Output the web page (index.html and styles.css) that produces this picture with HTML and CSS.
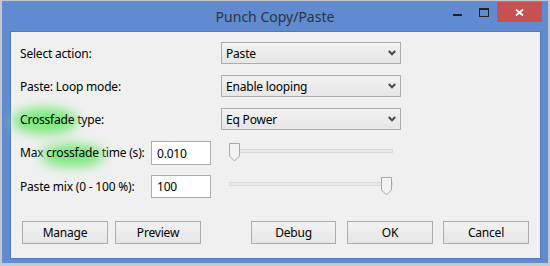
FILE: index.html
```html
<!DOCTYPE html>
<html>
<head>
<meta charset="utf-8">
<link rel="stylesheet" href="styles.css">
</head>
<body>
<div class="window">
  <div class="titlebar">
    <div class="tb-side"></div>
    <div class="title">Punch Copy/Paste</div>
    <div class="tb-side tb-controls">
      <div class="ctl ctl-min"><span class="min-bar"></span></div>
      <div class="ctl ctl-max"><span class="max-box"></span></div>
      <div class="ctl ctl-close">
        <svg width="9" height="7" viewBox="0 0 9 7"><path d="M1 0.5 L8 6.5 M8 0.5 L1 6.5" stroke="#fff" stroke-width="1.8" fill="none"/></svg>
      </div>
    </div>
  </div>
  <div class="client">
    <div class="row row-combo">
      <label class="lbl lbl-wide">Select action:</label>
      <div class="combo"><span>Paste</span><svg class="chev" width="8" height="6" viewBox="0 0 8 6"><path d="M0.8 1 L4 4.3 L7.2 1" stroke="#4a4a4a" stroke-width="2" fill="none"/></svg></div>
    </div>
    <div class="row row-combo">
      <label class="lbl lbl-wide">Paste: Loop mode:</label>
      <div class="combo"><span>Enable looping</span><svg class="chev" width="8" height="6" viewBox="0 0 8 6"><path d="M0.8 1 L4 4.3 L7.2 1" stroke="#4a4a4a" stroke-width="2" fill="none"/></svg></div>
    </div>
    <div class="row row-combo">
      <label class="lbl lbl-wide"><span class="hl hl-a">Crossfade</span> type:</label>
      <div class="combo"><span>Eq Power</span><svg class="chev" width="8" height="6" viewBox="0 0 8 6"><path d="M0.8 1 L4 4.3 L7.2 1" stroke="#4a4a4a" stroke-width="2" fill="none"/></svg></div>
    </div>
    <div class="row row-edit">
      <label class="lbl lbl-narrow">Max <span class="hl hl-b">crossfade</span> time (s):</label>
      <div class="edit">0.010</div>
      <div class="slider">
        <div class="track"></div>
        <svg class="thumb thumb-left" width="12" height="19" viewBox="0 0 12 19"><path d="M0.5 0.5 H10.5 V13 L5.5 18 L0.5 13 Z" fill="#f2f2f2" stroke="#a8a8a8"/></svg>
      </div>
    </div>
    <div class="row row-edit row-edit2">
      <label class="lbl lbl-narrow">Paste mix (0 - 100 %):</label>
      <div class="edit">100</div>
      <div class="slider">
        <div class="track"></div>
        <svg class="thumb thumb-right" width="12" height="19" viewBox="0 0 12 19"><path d="M0.5 0.5 H10.5 V13 L5.5 18 L0.5 13 Z" fill="#f2f2f2" stroke="#a8a8a8"/></svg>
      </div>
    </div>
    <div class="buttons">
      <div class="btn">Manage</div>
      <div class="btn btn-preview">Preview</div>
      <div class="btn btn-debug">Debug</div>
      <div class="btn btn-ok">OK</div>
      <div class="btn btn-cancel">Cancel</div>
    </div>
  </div>
</div>
</body>
</html>
```
FILE: styles.css
```css
* { box-sizing: border-box; }
html, body { margin: 0; padding: 0; }
body {
  width: 550px;
  height: 266px;
  background: #c4c7cd;
  padding: 1px 2px 0 2px;
  font-family: "Noto Sans", "Open Sans", sans-serif;
  font-size: 12px;
  letter-spacing: -0.2px;
  color: #000;
  overflow: hidden;
}
.window {
  width: 546px;
  height: 262px;
  background: #618bd0;
  padding: 0 7px 4px 8px;
  display: flex;
  flex-direction: column;
}
.titlebar {
  height: 30px;
  display: grid;
  grid-template-columns: 1fr auto 1fr;
  margin: 0 -7px 0 -8px;
}
.title {
  font-size: 14px;
  letter-spacing: 0;
  color: #2d3440;
  line-height: 30px;
  padding-top: 1px;
}
.tb-controls {
  display: flex;
  justify-content: flex-end;
  align-items: flex-start;
  padding-right: 6px;
}
.ctl { display: flex; align-items: center; justify-content: center; }
.ctl-min { width: 10px; height: 21px; margin-right: 16px; align-items: flex-start; padding-top: 13px; }
.min-bar { display: block; width: 9px; height: 2px; background: #222; }
.ctl-max { width: 11px; height: 21px; margin-right: 8px; align-items: flex-start; padding-top: 7px; }
.max-box { display: block; width: 10px; height: 9px; border: 1px solid #222; border-top-width: 2px; }
.ctl-close { width: 45px; height: 20px; background: #c75050; margin-top: 1px; }
.client {
  flex: 1;
  background: #f0f0f0;
  border: 1px solid #5278bd;
  padding: 10px 0 0 9px;
}
.row { display: flex; align-items: center; }
.row-combo { height: 22px; margin-bottom: 11px; }
.lbl { display: block; white-space: nowrap; }
.lbl-wide { width: 201px; }
.lbl-narrow { width: 131px; }
.combo {
  width: 180px;
  height: 22px;
  border: 1px solid #acacac;
  background: linear-gradient(#f2f2f2, #e6e6e6);
  display: flex;
  align-items: center;
  justify-content: space-between;
  padding: 0 4px 0 4px;
}
.chev { display: block; margin-top: -1px; }
.row-edit { height: 24px; margin-bottom: 10px; align-items: stretch; }
.row-edit .lbl { line-height: 24px; }
.row-edit2 { height: 23px; margin-bottom: 23px; }
.row-edit2 .lbl { line-height: 23px; }
.edit {
  width: 60px;
  border: 1px solid #acacac;
  background: #fff;
  padding: 0 0 0 5px;
  display: flex;
  align-items: center;
}
.slider {
  position: relative;
  width: 164px;
  margin-left: 18px;
}
.track {
  margin-top: 8px;
  height: 4px;
  border: 1px solid #d9d9d9;
  background: #e7eaea;
}
.row-edit2 .track { margin-top: 7px; }
.thumb { position: absolute; top: 2px; }
.thumb-left { left: 0; }
.thumb-right { right: 0; }
.buttons { display: flex; padding-left: 2px; }
.btn {
  width: 86px;
  height: 23px;
  border: 1px solid #acacac;
  background: linear-gradient(#f2f2f2, #e6e6e6);
  display: flex;
  align-items: center;
  justify-content: center;
}
.btn-preview { margin-left: 7px; }
.btn-debug { margin-left: 50px; width: 85px; }
.btn-ok { margin-left: 11px; }
.btn-cancel { margin-left: 10px; }
.hl { position: relative; z-index: 0; }
.hl::before {
  content: "";
  position: absolute;
  z-index: -1;
  border-radius: 50%;
  background: #7be87b;
  filter: blur(6px);
}
.hl-a::before { left: -8px; right: -4px; top: -3px; bottom: -6px; }
.hl-b::before { left: -5px; right: -5px; top: 0px; bottom: -6px; }
```
